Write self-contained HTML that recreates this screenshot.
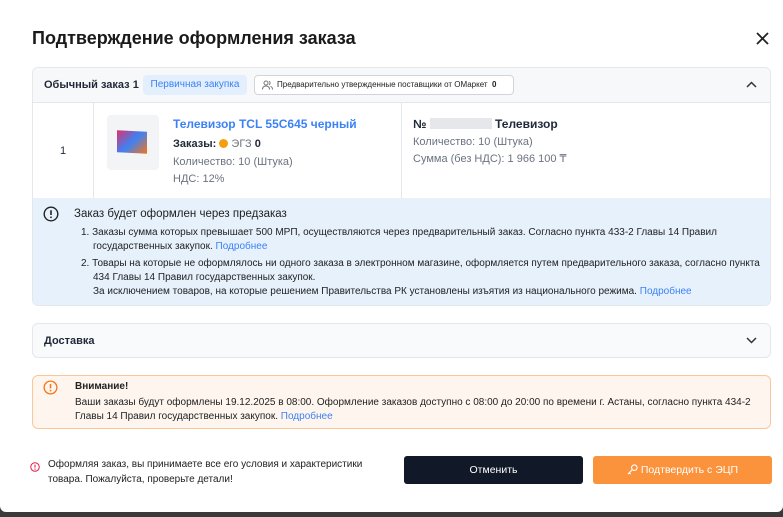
<!DOCTYPE html>
<html><head><meta charset="utf-8"><style>
*{box-sizing:border-box;margin:0;padding:0}
body{width:783px;height:517px;background:#3a3a3a;font-family:"Liberation Sans",sans-serif;color:#1f2937;overflow:hidden;position:relative}
.modal{position:absolute;left:0;top:0;width:783px;height:512px;background:#fff;border-radius:0 0 6px 6px}
.abs{position:absolute}
h1{position:absolute;left:32px;top:28px;font-size:18px;font-weight:bold;color:#1a1a1a}
.card{position:absolute;left:32px;top:67px;width:739px;height:239px;border:1px solid #e5e7eb;border-radius:6px;overflow:hidden}
.hdr{height:35px;background:#f7f8fa;border-bottom:1px solid #e5e7eb;position:relative}
.t{font-size:11px}
.blue{color:#3b82f6}
.gray{color:#6b7280}
.info{position:absolute;left:0;top:130px;width:739px;height:109px;background:#e6f1fc}
.box{position:absolute;border:1px solid #e5e7eb;border-radius:6px}
</style></head><body>
<div class="modal">
<h1>Подтверждение оформления заказа</h1>
<svg class="abs" style="left:756px;top:32px" width="13" height="13" viewBox="0 0 13 13"><path d="M1 1L12 12M12 1L1 12" stroke="#222" stroke-width="1.8"/></svg>
<div class="card">
 <div class="hdr">
  <div class="abs t" style="left:11px;top:11px;font-weight:bold">Обычный заказ 1</div>
  <div class="abs" style="left:110px;top:7px;width:104px;height:20px;background:#e3effd;border-radius:4px;font-size:10px;color:#3b82f6;text-align:center;line-height:20px">Первичная закупка</div>
  <div class="abs" style="left:221px;top:7px;width:260px;height:20px;background:#fff;border:1px solid #d1d5db;border-radius:4px;font-size:8px;line-height:18px;padding-left:22px;color:#222">
   <svg class="abs" style="left:7px;top:4px" width="11" height="10" viewBox="0 0 11 10"><circle cx="4" cy="3" r="2" fill="none" stroke="#777"/><path d="M0.5 9.5C0.5 7 2 6 4 6S7.5 7 7.5 9.5M7 1.2A2 2 0 0 1 7 4.8M8.5 6.3C9.8 6.8 10.5 8 10.5 9.5" fill="none" stroke="#777"/></svg>
   Предварительно утвержденные поставщики от ОМаркет&nbsp;&nbsp;<b>0</b></div>
  <svg class="abs" style="left:713px;top:13px" width="11" height="7" viewBox="0 0 11 7"><path d="M1 6L5.5 1.5L10 6" fill="none" stroke="#333" stroke-width="1.5"/></svg>
 </div>
 <div class="abs" style="left:60px;top:35px;width:1px;height:95px;background:#e5e7eb"></div>
 <div class="abs" style="left:368px;top:35px;width:1px;height:95px;background:#e5e7eb"></div>
 <div class="abs t" style="left:27px;top:77px">1</div>
 <div class="abs" style="left:74px;top:47px;width:52px;height:55px;background:#f3f4f6;border-radius:4px"></div>
 <div class="abs" style="left:84px;top:63px;width:30px;height:22px;background:linear-gradient(135deg,#e1306c,#3b82f6 50%,#f97316);transform:skewY(3deg)"></div>
 <div class="abs blue" style="left:140px;top:49px;font-size:12px;font-weight:bold">Телевизор TCL 55C645 черный</div>
 <div class="abs t" style="left:140px;top:70px;font-weight:bold">Заказы: <span style="display:inline-block;width:9px;height:9px;border-radius:50%;background:#f59e0b;vertical-align:-1px"></span> <span class="gray" style="font-weight:normal">ЭГЗ</span> 0</div>
 <div class="abs t gray" style="left:140px;top:88px">Количество: 10 (Штука)</div>
 <div class="abs t gray" style="left:140px;top:105px">НДС: 12%</div>
 <div class="abs" style="left:380px;top:49px;font-size:12px;font-weight:bold">№ <span style="display:inline-block;width:62px;height:11px;background:#e5e7eb;vertical-align:-1px"></span> Телевизор</div>
 <div class="abs t gray" style="left:380px;top:68px">Количество: 10 (Штука)</div>
 <div class="abs t gray" style="left:380px;top:84px">Сумма (без НДС): 1 966 100 ₸</div>
 <div class="info">
  <svg class="abs" style="left:10px;top:8px" width="16" height="16" viewBox="0 0 16 16"><circle cx="8" cy="8" r="6.8" fill="none" stroke="#222" stroke-width="1.4"/><path d="M8 4.3V9" stroke="#222" stroke-width="1.6"/><circle cx="8" cy="11.3" r="0.9" fill="#222"/></svg>
  <div class="abs" style="left:41px;top:10px;font-size:11.5px;color:#222">Заказ будет оформлен через предзаказ</div>
  <div class="abs" style="left:48px;top:28px;width:680px;font-size:10px;line-height:14px;color:#222">
   <div style="padding-left:12px;text-indent:-12px">1. Заказы сумма которых превышает 500 МРП, осуществляются через предварительный заказ. Согласно пункта 433-2 Главы 14 Правил государственных закупок. <span class="blue">Подробнее</span></div>
   <div style="padding-left:12px;text-indent:-12px;margin-top:3px">2. Товары на которые не оформлялось ни одного заказа в электронном магазине, оформляется путем предварительного заказа, согласно пункта 434 Главы 14 Правил государственных закупок.<br>За исключением товаров, на которые решением Правительства РК установлены изъятия из национального режима. <span class="blue">Подробнее</span></div>
  </div>
 </div>
</div>
<div class="box" style="left:32px;top:323px;width:739px;height:35px;background:#f9fafb">
 <div class="abs t" style="left:11px;top:11px;font-weight:bold">Доставка</div>
 <svg class="abs" style="left:713px;top:13px" width="11" height="7" viewBox="0 0 11 7"><path d="M1 1L5.5 5.5L10 1" fill="none" stroke="#333" stroke-width="1.5"/></svg>
</div>
<div class="box" style="left:32px;top:375px;width:739px;height:54px;background:#fef5ee;border-color:#fbc79a">
 <svg class="abs" style="left:10px;top:4px" width="15" height="15" viewBox="0 0 16 16"><circle cx="8" cy="8" r="6.8" fill="none" stroke="#f97316" stroke-width="1.4"/><path d="M8 4.3V9" stroke="#f97316" stroke-width="1.6"/><circle cx="8" cy="11.3" r="0.9" fill="#f97316"/></svg>
 <div class="abs" style="left:42px;top:5px;font-size:10px;font-weight:bold;color:#222">Внимание!</div>
 <div class="abs" style="left:42px;top:20px;width:690px;font-size:10px;line-height:14px;color:#222">Ваши заказы будут оформлены 19.12.2025 в 08:00. Оформление заказов доступно с 08:00 до 20:00 по времени г. Астаны, согласно пункта 434-2 Главы 14 Правил государственных закупок. <span class="blue">Подробнее</span></div>
</div>
<svg class="abs" style="left:30px;top:462px" width="10" height="10" viewBox="0 0 16 16"><circle cx="8" cy="8" r="6.8" fill="none" stroke="#e11d48" stroke-width="1.6"/><path d="M8 4.3V9" stroke="#e11d48" stroke-width="1.8"/><circle cx="8" cy="11.3" r="1" fill="#e11d48"/></svg>
<div class="abs" style="left:48px;top:457px;width:330px;font-size:10px;line-height:15px;color:#222">Оформляя заказ, вы принимаете все его условия и характеристики товара. Пожалуйста, проверьте детали!</div>
<div class="abs" style="left:404px;top:456px;width:179px;height:28px;background:#111827;border-radius:3px;color:#fff;font-size:10.5px;text-align:center;line-height:28px">Отменить</div>
<div class="abs" style="left:593px;top:456px;width:179px;height:28px;background:#fb923c;border-radius:3px;color:#fff;font-size:10.5px;text-align:center;line-height:28px">
 <svg style="vertical-align:-2px" width="11" height="11" viewBox="0 0 12 12"><circle cx="8" cy="4" r="3" fill="none" stroke="#fff" stroke-width="1.2"/><path d="M6 6L1 11M2.5 9.5L4 11" stroke="#fff" stroke-width="1.2" fill="none"/></svg> Подтвердить с ЭЦП</div>
</div>
</body></html>
